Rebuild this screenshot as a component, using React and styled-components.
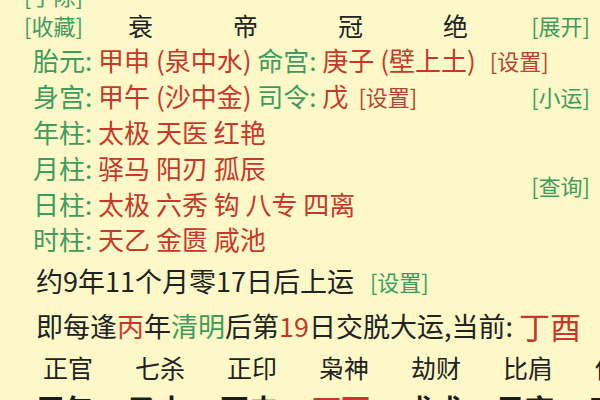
import React from "react";
import styled, { createGlobalStyle } from "styled-components";

const Global = createGlobalStyle`
  html, body { margin: 0; padding: 0; }
  body {
    background: #fcf8c7;
    font-family: "Noto Sans CJK SC", "Noto Sans", sans-serif;
    color: #222;
  }
`;

const Page = styled.div`
  width: 600px;
  height: 400px;
  overflow: hidden;
  display: flex;
  flex-direction: column;
  background: #fcf8c7;
`;

const Green = styled.span`
  color: #3f9c5f;
`;
const Red = styled.span`
  color: ${(p) => p.$dark ? "#b24535" : "#c6382b"};
  font-size: ${(p) => (p.$size ? p.$size + "px" : "inherit")};
`;

const Tag = styled.span`
  font-size: 22px;
  color: ${(p) => (p.$red ? "#b24535" : "#3f9c5f")};
  margin-left: ${(p) => p.$ml || 0}px;
  white-space: nowrap;
`;

const TopCut = styled.div`
  height: 24px;
  line-height: 24px;
  margin-top: -17px;
  padding-left: 24px;
  flex: none;
`;

const Header = styled.div`
  display: grid;
  grid-template-columns: 104px 105px 105px 105px 1fr auto;
  align-items: center;
  height: 34px;
  padding: 0 10px 0 24px;
  flex: none;
`;

const Stage = styled.span`
  font-size: 25px;
  color: #222;
`;

const Body = styled.div`
  display: grid;
  grid-template-columns: 1fr auto;
  padding: 0 10px 0 33px;
  margin-top: 1px;
  flex: none;
`;

const Rows = styled.div`
  display: flex;
  flex-direction: column;
  min-width: 0;
`;

const Row = styled.div`
  height: 35.8px;
  display: flex;
  align-items: center;
  font-size: 26px;
  white-space: nowrap;
`;

const Side = styled.div`
  display: flex;
  flex-direction: column;
  align-items: flex-end;
`;

const SideSlot = styled.div`
  height: 35.8px;
  display: flex;
  align-items: center;
  margin-top: ${(p) => p.$mt}px;
`;

const Line = styled.div`
  height: ${(p) => p.$h}px;
  display: flex;
  align-items: center;
  padding-left: 36px;
  font-size: 27px;
  white-space: nowrap;
  flex: none;
`;

const GodRow = styled.div`
  display: grid;
  grid-template-columns: repeat(7, 92px);
  height: 40px;
  align-items: center;
  padding-left: 43px;
  font-size: 25px;
  white-space: nowrap;
  flex: none;
`;

const PillarRow = styled.div`
  display: grid;
  grid-template-columns: repeat(7, 92px);
  height: 34px;
  align-items: center;
  padding-left: 36px;
  font-size: 29px;
  font-weight: 700;
  white-space: nowrap;
  flex: none;
`;

const Pillar = styled.span`
  color: ${(p) => (p.$red ? "#c6382b" : "#1c1c1c")};
`;

const gods = ["正官", "七杀", "正印", "枭神", "劫财", "比肩", "伤官"];
const pillars = ["甲午", "乙未", "丙申", "丁酉", "戊戌", "己亥", "庚子"];

export default function App() {
  return (
    <>
      <Global />
      <Page>
        <TopCut>
          <Tag>[手除]</Tag>
        </TopCut>
        <Header>
          <Tag>[收藏]</Tag>
          <Stage>衰</Stage>
          <Stage>帝</Stage>
          <Stage>冠</Stage>
          <Stage>绝</Stage>
          <Tag>[展开]</Tag>
        </Header>
        <Body>
          <Rows>
            <Row>
              <Green>胎元:</Green>&nbsp;<Red>甲申 (泉中水)</Red>&nbsp;<Green>命宫:</Green>&nbsp;<Red>庚子 (壁上土)</Red>
              <Tag $red $ml={14}>[设置]</Tag>
            </Row>
            <Row>
              <Green>身宫:</Green>&nbsp;<Red>甲午 (沙中金)</Red>&nbsp;<Green>司令:</Green>&nbsp;<Red>戊</Red>
              <Tag $red $ml={10}>[设置]</Tag>
            </Row>
            <Row>
              <Green>年柱:</Green>&nbsp;<Red>太极 天医 红艳</Red>
            </Row>
            <Row>
              <Green>月柱:</Green>&nbsp;<Red>驿马 阳刃 孤辰</Red>
            </Row>
            <Row>
              <Green>日柱:</Green>&nbsp;<Red>太极 六秀 钩 八专 四离</Red>
            </Row>
            <Row>
              <Green>时柱:</Green>&nbsp;<Red>天乙 金匮 咸池</Red>
            </Row>
          </Rows>
          <Side>
            <SideSlot $mt={35.8}>
              <Tag>[小运]</Tag>
            </SideSlot>
            <SideSlot $mt={53.5}>
              <Tag>[查询]</Tag>
            </SideSlot>
          </Side>
        </Body>
        <Line $h={48}>
          约9年11个月零17日后上运
          <Tag $ml={16}>[设置]</Tag>
        </Line>
        <Line $h={42}>
          即每逢<Red>丙</Red>年<Green>清明</Green>后第<Red>19</Red>日交脱大运,当前:&nbsp;
          <Red $size={31}>丁酉</Red>
        </Line>
        <GodRow>
          {gods.map((g) => (
            <span key={g}>{g}</span>
          ))}
        </GodRow>
        <PillarRow>
          {pillars.map((p) => (
            <Pillar key={p} $red={p === "丁酉"}>
              {p}
            </Pillar>
          ))}
        </PillarRow>
      </Page>
    </>
  );
}
